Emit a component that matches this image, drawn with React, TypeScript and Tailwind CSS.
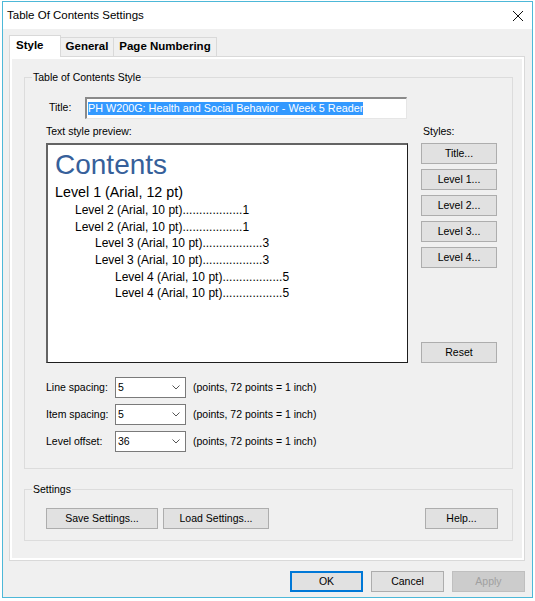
import React from 'react';

const DOTS = '..................';

const previewRows = [
  { pad: 'pl-[20px]', label: 'Level 2 (Arial, 10 pt)', page: '1' },
  { pad: 'pl-[20px]', label: 'Level 2 (Arial, 10 pt)', page: '1' },
  { pad: 'pl-[40px]', label: 'Level 3 (Arial, 10 pt)', page: '3' },
  { pad: 'pl-[40px]', label: 'Level 3 (Arial, 10 pt)', page: '3' },
  { pad: 'pl-[60px]', label: 'Level 4 (Arial, 10 pt)', page: '5' },
  { pad: 'pl-[60px]', label: 'Level 4 (Arial, 10 pt)', page: '5' },
];

const spacingRows = [
  { label: 'Line spacing:', value: '5' },
  { label: 'Item spacing:', value: '5' },
  { label: 'Level offset:', value: '36' },
];

const Btn: React.FC<{ className?: string; children: React.ReactNode }> = ({ className = '', children }) => (
  <button
    className={`h-[21px] border border-[#adadad] bg-[#e1e1e1] text-[10.5px] leading-none text-black flex items-center justify-center ${className}`}
  >
    {children}
  </button>
);

const Combo: React.FC<{ value: string }> = ({ value }) => (
  <div className="w-[71px] h-[21px] border border-[#7a7a7a] bg-white flex items-center pl-[2px] text-[10.5px]">
    <span>{value}</span>
    <svg className="ml-auto mr-[5px]" width="8" height="5" viewBox="0 0 8 5">
      <path d="M0.5 0.5 L4 4 L7.5 0.5" fill="none" stroke="#555" strokeWidth="1" />
    </svg>
  </div>
);

export default function App() {
  return (
    <div className="w-[535px] h-[601px] bg-white overflow-hidden font-['Liberation_Sans',Arial,sans-serif] text-black">
      <div className="ml-[2px] mt-[1px] w-[531px] h-[597px] border border-[#4db8d8] flex flex-col">
        {/* title bar */}
        <div className="h-[27px] bg-white flex items-center pl-[4px] pr-[9px]">
          <span className="text-[11.5px]">Table Of Contents Settings</span>
          <svg className="ml-auto" width="10" height="10" viewBox="0 0 10 10">
            <path d="M0 0 L10 10 M10 0 L0 10" stroke="#111" strokeWidth="1" />
          </svg>
        </div>

        <div className="flex-1 bg-[#f0f0f0] pl-[6px] pr-[7px] pt-[6px]">
          {/* tabs */}
          <div className="h-[21px] flex items-end text-[11.5px] font-bold">
            <div className="relative z-10 -mb-px h-[22px] w-[52px] border border-b-0 border-[#d9d9d9] bg-white pl-[6px] pt-[2px] leading-[14px]">
              Style
            </div>
            <div className="h-[19px] w-[53px] border-t border-r border-[#d9d9d9] text-center pt-[1px] leading-[14px]">
              General
            </div>
            <div className="h-[19px] w-[103px] border-t border-r border-[#d9d9d9] text-center pt-[1px] leading-[14px]">
              Page Numbering
            </div>
          </div>

          {/* panel */}
          <div className="h-[505px] border border-[#d9d9d9] bg-white p-[2px]">
            <div className="h-full bg-[#f0f0f0] pt-[11px] pl-[12px] pr-[9px] text-[10.5px]">
              <fieldset className="border border-[#dcdcdc] pb-[16px]">
                <legend className="ml-[7px] px-[1px] leading-[14px]">Table of Contents Style</legend>

                <div className="mt-[13px] flex items-center pl-[24px]">
                  <span className="w-[36px]">Title:</span>
                  <div className="w-[322px] h-[22px] bg-white border-t-2 border-l-2 border-t-[#8a8a8a] border-l-[#8a8a8a] border-r border-b border-r-[#e6e6e6] border-b-[#e6e6e6] flex items-center pl-[1px]">
                    <span className="bg-[#3399ff] text-white text-[10.8px] leading-[13px]">
                      PH W200G: Health and Social Behavior - Week 5 Reader
                    </span>
                  </div>
                </div>

                <div className="mt-[5px] flex pl-[21px]">
                  <div className="w-[362px]">
                    <div className="leading-[14px]">Text style preview:</div>
                    <div className="mt-[5px] h-[220px] bg-white border-t-2 border-l-2 border-t-[#646464] border-l-[#646464] border-r border-b border-r-[#1e1e1e] border-b-[#1e1e1e] pl-[7px] pt-[6px] font-['Liberation_Sans',Arial,sans-serif] whitespace-nowrap">
                      <div className="text-[28px] leading-[28px] text-[#36609a]">Contents</div>
                      <div className="mt-[3px] text-[14.3px] leading-[20px]">Level 1 (Arial, 12 pt)</div>
                      {previewRows.map((r, i) => (
                        <div key={i} className={`text-[12px] leading-[16.67px] ${r.pad}`}>
                          {r.label}
                          {DOTS}
                          {r.page}
                        </div>
                      ))}
                    </div>
                  </div>

                  <div className="ml-[13px] w-[76px] flex flex-col">
                    <div className="pl-[2px] leading-[14px]">Styles:</div>
                    <div className="mt-[5px] flex flex-col gap-[5px]">
                      <Btn>Title...</Btn>
                      <Btn>Level 1...</Btn>
                      <Btn>Level 2...</Btn>
                      <Btn>Level 3...</Btn>
                      <Btn>Level 4...</Btn>
                    </div>
                    <Btn className="mt-auto">Reset</Btn>
                  </div>
                </div>

                <div className="mt-[14px] flex flex-col gap-[6px] pl-[21px]">
                  {spacingRows.map((r) => (
                    <div key={r.label} className="h-[21px] flex items-center">
                      <span className="w-[69px]">{r.label}</span>
                      <Combo value={r.value} />
                      <span className="ml-[7px]">(points, 72 points = 1 inch)</span>
                    </div>
                  ))}
                </div>
              </fieldset>

              <fieldset className="mt-[13px] border border-[#dcdcdc] pb-[11px]">
                <legend className="ml-[7px] px-[1px] leading-[14px]">Settings</legend>
                <div className="mt-[12px] flex pl-[21px] pr-[14px]">
                  <Btn className="w-[112px]">Save Settings...</Btn>
                  <Btn className="ml-[5px] w-[106px]">Load Settings...</Btn>
                  <Btn className="ml-auto w-[73px]">Help...</Btn>
                </div>
              </fieldset>
            </div>
          </div>

          {/* dialog buttons */}
          <div className="mt-[10px] flex justify-end gap-[8px] text-[10.5px]">
            <button className="w-[73px] h-[21px] border-2 border-[#0078d7] bg-[#e1e1e1] flex items-center justify-center">
              OK
            </button>
            <Btn className="w-[73px]">Cancel</Btn>
            <button className="w-[73px] h-[21px] border border-[#bfbfbf] bg-[#cccccc] text-[#a0a0a0] flex items-center justify-center">
              Apply
            </button>
          </div>
        </div>
      </div>
    </div>
  );
}
